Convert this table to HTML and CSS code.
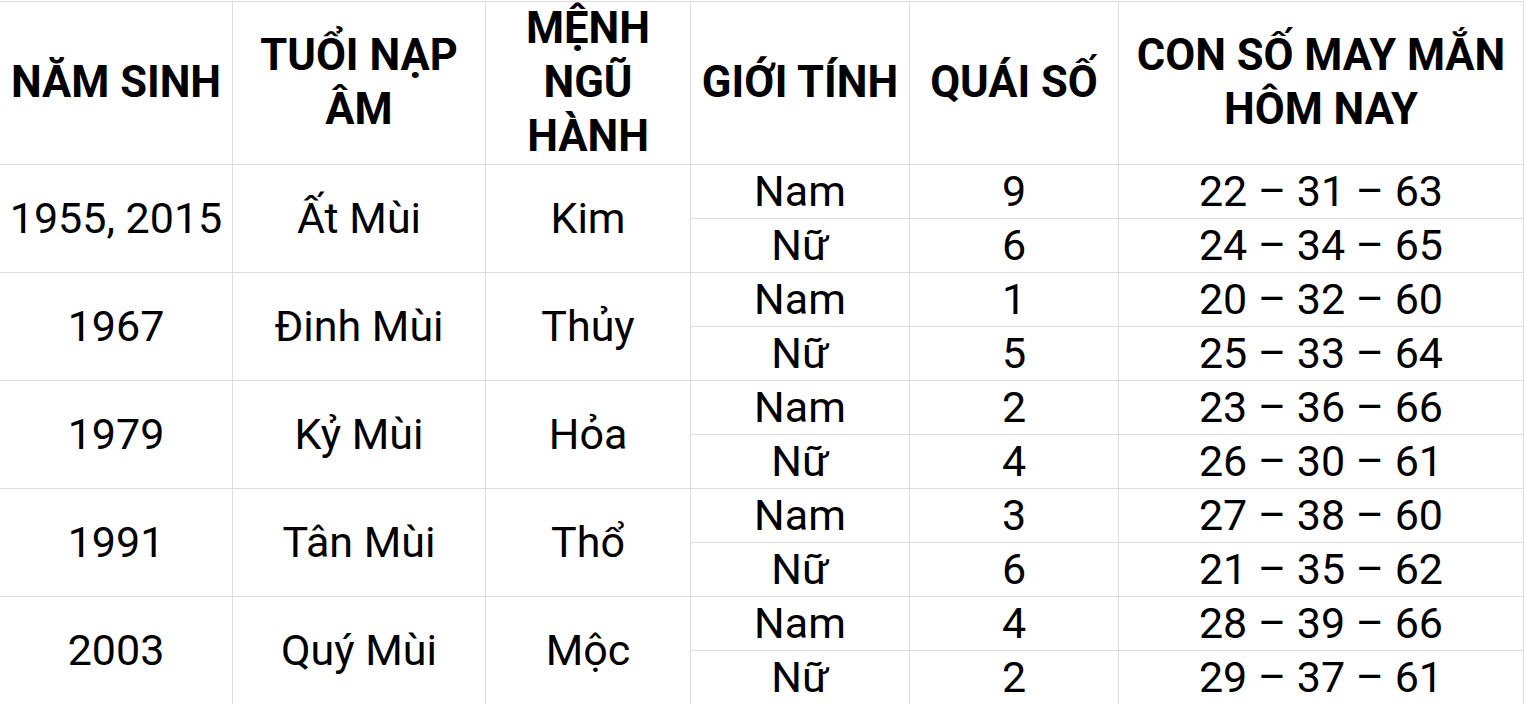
FILE: index.html
```html
<!DOCTYPE html>
<html lang="vi">
<head>
<meta charset="utf-8">
<title>Con số may mắn</title>
<link rel="stylesheet" href="styles.css">
</head>
<body>
<table class="lucky">
  <colgroup>
    <col class="c1"><col class="c2"><col class="c3"><col class="c4"><col class="c5"><col class="c6">
  </colgroup>
  <thead>
    <tr>
      <th>NĂM SINH</th>
      <th>TUỔI NẠP ÂM</th>
      <th>MỆNH NGŨ HÀNH</th>
      <th>GIỚI TÍNH</th>
      <th>QUÁI SỐ</th>
      <th>CON SỐ MAY MẮN HÔM NAY</th>
    </tr>
  </thead>
  <tbody>
    <tr><td rowspan="2">1955, 2015</td><td rowspan="2">Ất Mùi</td><td rowspan="2">Kim</td><td>Nam</td><td>9</td><td>22 – 31 – 63</td></tr>
    <tr><td>Nữ</td><td>6</td><td>24 – 34 – 65</td></tr>
    <tr><td rowspan="2">1967</td><td rowspan="2">Đinh Mùi</td><td rowspan="2">Thủy</td><td>Nam</td><td>1</td><td>20 – 32 – 60</td></tr>
    <tr><td>Nữ</td><td>5</td><td>25 – 33 – 64</td></tr>
    <tr><td rowspan="2">1979</td><td rowspan="2">Kỷ Mùi</td><td rowspan="2">Hỏa</td><td>Nam</td><td>2</td><td>23 – 36 – 66</td></tr>
    <tr><td>Nữ</td><td>4</td><td>26 – 30 – 61</td></tr>
    <tr><td rowspan="2">1991</td><td rowspan="2">Tân Mùi</td><td rowspan="2">Thổ</td><td>Nam</td><td>3</td><td>27 – 38 – 60</td></tr>
    <tr><td>Nữ</td><td>6</td><td>21 – 35 – 62</td></tr>
    <tr><td rowspan="2">2003</td><td rowspan="2">Quý Mùi</td><td rowspan="2">Mộc</td><td>Nam</td><td>4</td><td>28 – 39 – 66</td></tr>
    <tr><td>Nữ</td><td>2</td><td>29 – 37 – 61</td></tr>
  </tbody>
</table>
</body>
</html>
```
FILE: styles.css
```css
html, body {
  margin: 0;
  padding: 0;
  background: #ffffff;
}
body {
  padding-top: 1px;
  font-family: Roboto, "Liberation Sans", Arial, sans-serif;
  color: #000000;
}
.lucky {
  border-collapse: separate;
  border-spacing: 0;
  table-layout: fixed;
  width: 1524px;
}
.c1 { width: 233px; }
.c2 { width: 253px; }
.c3 { width: 205px; }
.c4 { width: 219px; }
.c5 { width: 209px; }
.c6 { width: 405px; }
.lucky th,
.lucky td {
  box-sizing: border-box;
  border-right: 1px solid #dddddd;
  border-bottom: 1px solid #dddddd;
  padding: 0 4px;
  text-align: center;
  vertical-align: middle;
}
.lucky th {
  border-top: 1px solid #dddddd;
  font-weight: 700;
  font-size: 43.5px;
  line-height: 54px;
  height: 164px;
}
.lucky td {
  font-weight: 400;
  font-size: 43px;
  line-height: 53px;
  height: 54px;
}
```
